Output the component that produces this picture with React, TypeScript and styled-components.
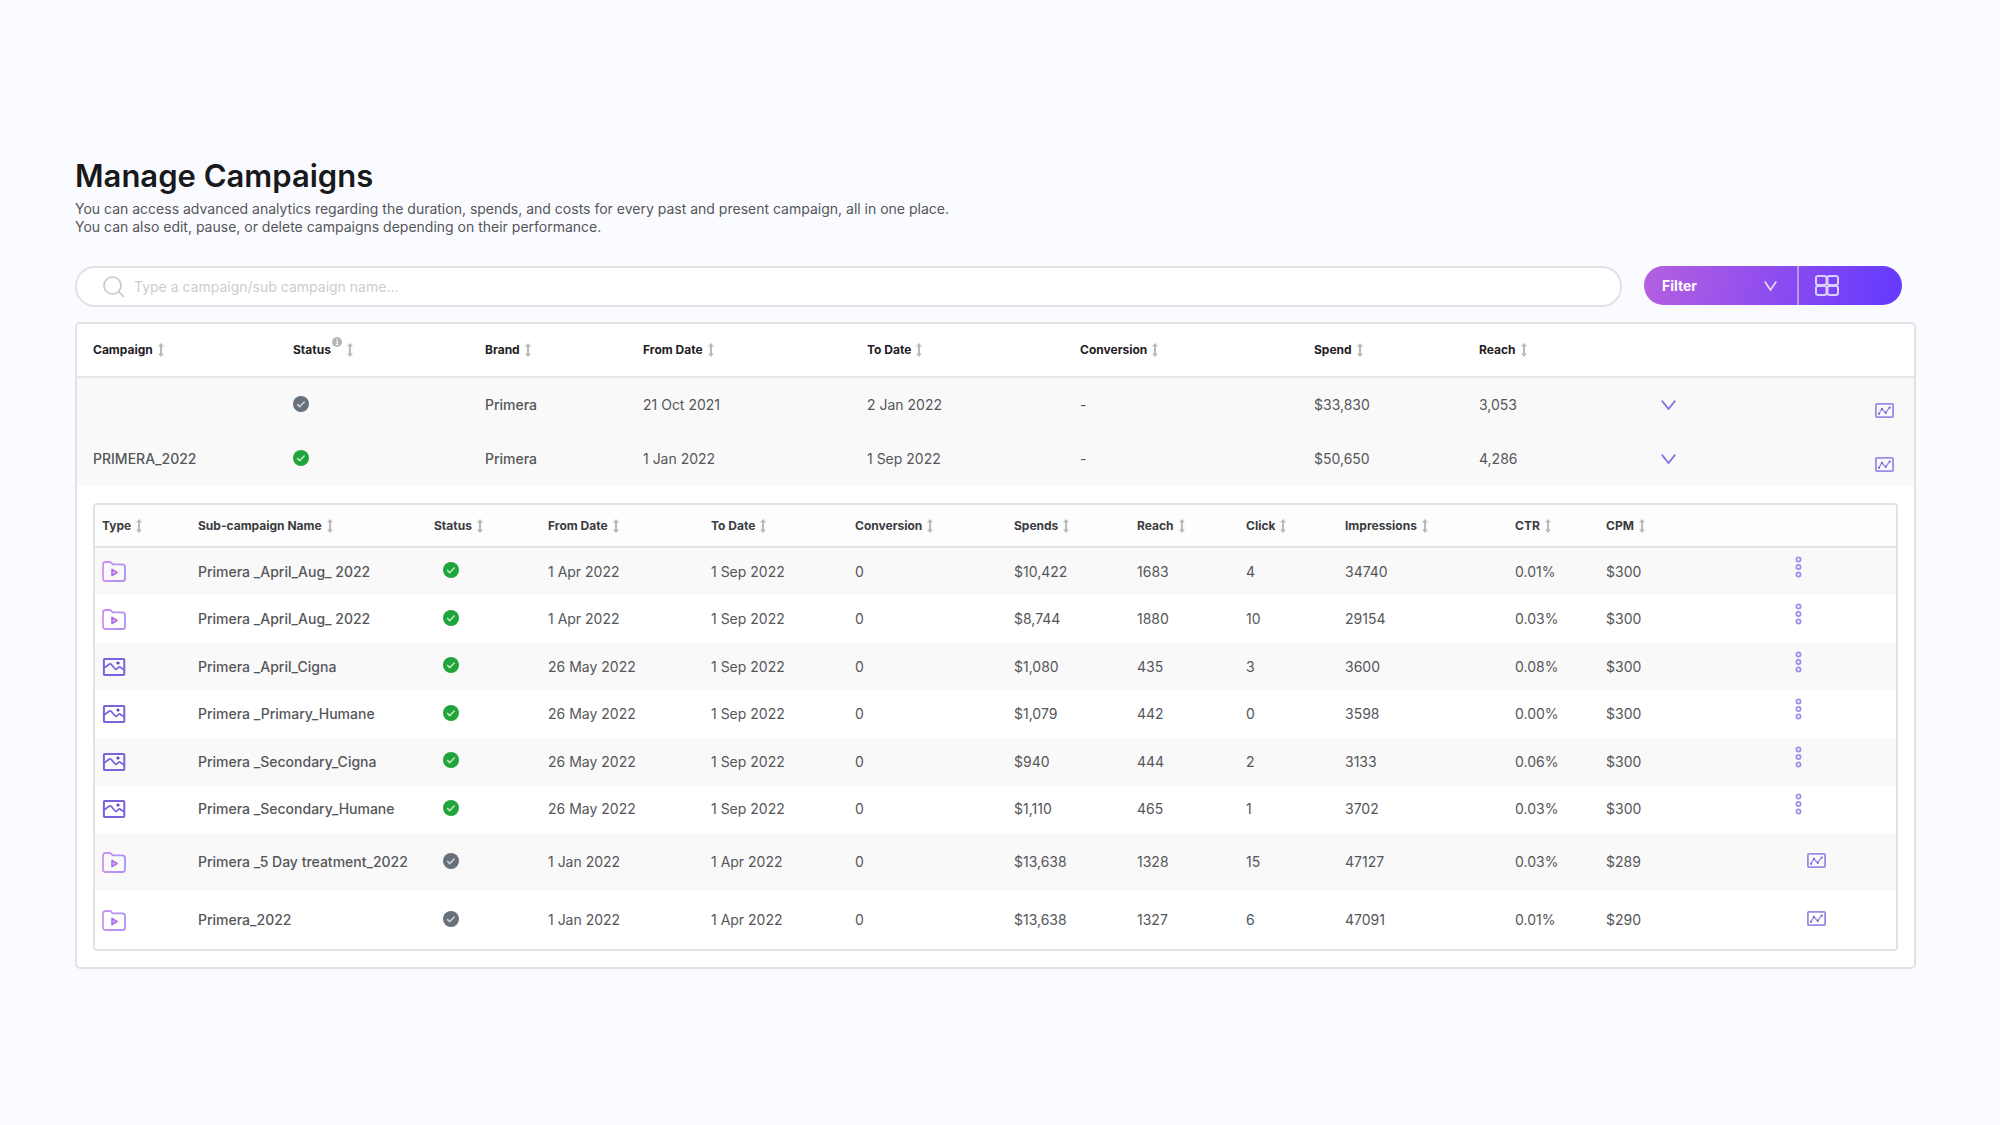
import React from "react";
import styled, { createGlobalStyle, css } from "styled-components";

const GlobalStyle = createGlobalStyle`
  *, *::before, *::after { box-sizing: border-box; }
  body {
    margin: 0;
    background: #fafbfe;
    color: #55565a;
    font-family: Inter, "Noto Sans", sans-serif;
    font-size: 14px;
    line-height: 18px;
  }
  button, input { font: inherit; color: inherit; }
  svg { display: block; }
`;

const Page = styled.main`
  padding: 156px 84px 156px 75px;
`;

const Title = styled.h1`
  margin: 0 0 4px;
  color: #17191c;
  font-size: 31px;
  font-weight: 600;
  line-height: 40px;
`;

const Intro = styled.p`
  margin: 0;
`;

const Toolbar = styled.div`
  display: flex;
  align-items: flex-start;
  gap: 22px;
  margin: 30px 0 15px;
  padding-right: 14px;
`;

const SearchBox = styled.label`
  display: flex;
  flex: 1;
  align-items: center;
  gap: 9px;
  height: 41px;
  padding: 0 26px;
  border: 2px solid #e1e2e4;
  border-radius: 20px;
  background: #fff;
`;

const SearchInput = styled.input`
  flex: 1;
  min-width: 0;
  padding: 0;
  border: 0;
  outline: 0;
  background: none;
  &::placeholder { color: #cdcdcd; opacity: 1; }
`;

const ActionGroup = styled.div`
  display: flex;
  height: 39px;
  border-radius: 20px;
  overflow: hidden;
  background: linear-gradient(100deg, #b35fe0 2%, #8a4bf0 55%, #693cfd 92%);
`;

const ActionButton = styled.button<{ $width: number }>`
  display: flex;
  align-items: center;
  justify-content: space-between;
  width: ${(p) => p.$width}px;
  padding: 0 20px 0 18px;
  border: 0;
  background: none;
  color: #fff;
  font-weight: 700;
  cursor: pointer;
  & + & { border-left: 2px solid #b19be6; padding-left: 16px; }
`;

const Panel = styled.section`
  overflow-x: auto;
  border: 2px solid #e1e2e4;
  border-radius: 5px;
  background: #fff;
`;

const Table = styled.table`
  width: 100%;
  table-layout: fixed;
  border-collapse: separate;
  border-spacing: 0;
`;

const Col = styled.col<{ $width: number }>`
  width: ${(p) => p.$width}px;
`;

type Level = "campaign" | "sub";

const HeadCell = styled.th<{ $level: Level }>`
  padding: 0 0 0 16px;
  height: 54px;
  border-bottom: 2px solid #e6e6e7;
  text-align: left;
  white-space: nowrap;
  ${(p) =>
    p.$level === "sub" &&
    css`
      height: 43px;
      padding-left: 7px;
      border-color: #e1e2e4;
      background: #fdfdfe;
    `}
`;

const SortButton = styled.button<{ $level: Level }>`
  display: flex;
  align-items: center;
  gap: 5px;
  padding: 0;
  border: 0;
  background: none;
  color: ${(p) => (p.$level === "sub" ? "#3a3c40" : "#1f2124")};
  font-size: 12px;
  font-weight: 700;
  cursor: pointer;
`;

const InfoMark = styled.span`
  height: 18px;
  margin: -8px 0 0 -4px;
`;

const Cell = styled.td<{ $level: Level; $shade?: boolean; $tall?: boolean }>`
  height: ${(p) => (p.$level === "campaign" ? 54 : p.$tall ? 58 : p.$shade ? 47 : 48)}px;
  padding: 0 0 0 ${(p) => (p.$level === "campaign" ? 16 : 7)}px;
  background: ${(p) => (p.$shade ? "#f9f9f9" : "#fff")};
  white-space: nowrap;
`;

const Name = styled.span`
  font-weight: 500;
`;

const StatusMark = styled.span<{ $level: Level }>`
  display: flex;
  padding: ${(p) => (p.$level === "sub" ? "0 0 3px 9px" : "0 0 2px")};
`;

const IconButton = styled.button<{ $kind: "expand" | "report" | "menu" | "subReport" }>`
  display: flex;
  border: 0;
  background: none;
  cursor: pointer;
  padding: ${(p) =>
    ({ expand: "0", report: "10px 0 0", menu: "0 0 10px", subReport: "0 0 4px 12px" })[p.$kind]};
`;

const SubCell = styled.td`
  padding: 17px 16px 16px;
`;

const SubPanel = styled.div`
  overflow: hidden;
  border: 2px solid #e1e2e4;
  border-radius: 4px;
`;

const SortIcon = () => (
  <svg width="6" height="14" viewBox="0 0 6 14" aria-hidden="true">
    <path d="M3 2v10" stroke="#b9b9b9" strokeWidth="2" />
    <path d="M0 3.5 3 0l3 3.5zM0 10.5 3 14l3-3.5z" fill="#b9b9b9" />
  </svg>
);

const InfoIcon = () => (
  <svg width="10" height="10" viewBox="0 0 10 10" aria-hidden="true">
    <circle cx="5" cy="5" r="5" fill="#b4b4b4" />
    <path d="M4 4.4h1.3v3M3.8 7.4h2.6" stroke="#fff" fill="none" />
    <circle cx="5" cy="2.6" r=".8" fill="#fff" />
  </svg>
);

const SearchIcon = () => (
  <svg width="22" height="22" viewBox="0 0 22 22" fill="none" stroke="#c9c9c9" strokeWidth="1.7" aria-hidden="true">
    <circle cx="9.5" cy="9.5" r="8.5" />
    <path d="m15.6 15.6 5.4 5.4" />
  </svg>
);

const Chevron = ({ color, width }: { color: string; width: number }) => (
  <svg width={width} height="10" viewBox={`0 0 ${width} 10`} fill="none" stroke={color} strokeWidth="1.8" aria-hidden="true">
    <path d={`M.8 .6 ${width / 2} 9 ${width - 0.8} .6`} />
  </svg>
);

const GridIcon = () => (
  <svg width="24" height="21" viewBox="0 0 24 21" fill="none" stroke="#dccffc" strokeWidth="2" aria-hidden="true">
    <rect x="1" y="1" width="10.500" height="9" rx="2.200" />
    <rect x="12.500" y="1" width="10.500" height="9" rx="2.200" />
    <rect x="1" y="11" width="10.500" height="9" rx="2.200" />
    <rect x="12.500" y="11" width="10.500" height="9" rx="2.200" />
  </svg>
);

const CheckIcon = ({ active }: { active: boolean }) => (
  <svg width="16" height="16" viewBox="0 0 16 16" role="img" aria-label={active ? "Active" : "Finished"}>
    <circle cx="8" cy="8" r="8" fill={active ? "#1fa53c" : "#68707a"} />
    <path d="m4.2 8.1 2.5 2.5 5-5.2" fill="none" stroke={active ? "#c0e8b8" : "#d0d3d6"} strokeWidth="1.5" />
  </svg>
);

const ReportIcon = () => (
  <svg width="19" height="15" viewBox="0 0 19 15" fill="none" stroke="#968de4" aria-hidden="true">
    <rect x=".9" y=".9" width="17.2" height="13.2" rx="1" strokeWidth="1.8" />
    <path d="m3.8 11 3-5.2 3.8 4 4-5.4" strokeWidth="1.4" />
    <g fill="#6f62d8" stroke="none">
      <circle cx="4" cy="10.8" r="1.1" />
      <circle cx="7" cy="5.8" r="1.1" />
      <circle cx="10.8" cy="9.8" r="1.1" />
      <circle cx="14.8" cy="4.6" r="1.1" />
    </g>
  </svg>
);

const MenuIcon = () => (
  <svg width="7" height="22" viewBox="0 0 7 22" fill="none" stroke="#9a91e8" strokeWidth="1.8" aria-hidden="true">
    <circle cx="3.5" cy="3.5" r="2.1" />
    <circle cx="3.5" cy="11" r="2.1" />
    <circle cx="3.5" cy="18.5" r="2.1" />
  </svg>
);

const FolderIcon = () => (
  <svg width="24" height="21" viewBox="0 0 24 21" fill="none" role="img" aria-label="Video">
    <defs>
      <linearGradient id="folder" x1="0" y1="0" x2="24" y2="0" gradientUnits="userSpaceOnUse">
        <stop stopColor="#d193ec" />
        <stop offset="1" stopColor="#a792fa" />
      </linearGradient>
    </defs>
    <path
      d="M1 3.4Q1 1 3.4 1h4.200q1 0 1.700.800l1.400 1.600h9.600q2.700 0 2.700 2.600v11.400q0 2.600-2.600 2.600H3.600Q1 20 1 17.400z"
      stroke="url(#folder)"
      strokeWidth="1.8"
    />
    <path d="M10 8.400v6.200l5-3.100z" fill="#d9b8f8" stroke="#ab6bea" strokeWidth="1.6" strokeLinejoin="round" />
  </svg>
);

const ImageIcon = () => (
  <svg width="24" height="18" viewBox="0 0 24 18" fill="none" stroke="#7c62dc" role="img" aria-label="Image">
    <rect x="1.9" y="1" width="20.4" height="16" rx=".8" strokeWidth="2" />
    <path d="m2 10 5.500-4q.8-.5 1.500.2l4.200 4.800q.7.700 1.400.1l2.200-1.900q.7-.5 1.400 0l3.800 2.600" strokeWidth="1.7" />
    <circle cx="16" cy="5" r="1.6" fill="#5a3fd0" stroke="none" />
  </svg>
);

type Heading = { label: string; width: number; info?: boolean };

const campaignColumns: Heading[] = [
  { label: "Campaign", width: 200 },
  { label: "Status", width: 192, info: true },
  { label: "Brand", width: 158 },
  { label: "From Date", width: 224 },
  { label: "To Date", width: 213 },
  { label: "Conversion", width: 234 },
  { label: "Spend", width: 165 },
  { label: "Reach", width: 182 },
  { label: "", width: 214 },
  { label: "", width: 55 },
];

const subColumns: Heading[] = [
  { label: "Type", width: 96 },
  { label: "Sub-campaign Name", width: 236 },
  { label: "Status", width: 114 },
  { label: "From Date", width: 163 },
  { label: "To Date", width: 144 },
  { label: "Conversion", width: 159 },
  { label: "Spends", width: 123 },
  { label: "Reach", width: 109 },
  { label: "Click", width: 99 },
  { label: "Impressions", width: 170 },
  { label: "CTR", width: 91 },
  { label: "CPM", width: 189 },
  { label: "", width: 108 },
];

const campaigns = [
  { name: "", active: false, values: ["21 Oct 2021", "2 Jan 2022", "-", "$33,830", "3,053"] },
  { name: "PRIMERA_2022", active: true, values: ["1 Jan 2022", "1 Sep 2022", "-", "$50,650", "4,286"] },
];

const subCampaigns = [
  { video: true, name: "Primera _April_Aug_ 2022", active: true, values: ["1 Apr 2022", "1 Sep 2022", "0", "$10,422", "1683", "4", "34740", "0.01%", "$300"] },
  { video: true, name: "Primera _April_Aug_ 2022", active: true, values: ["1 Apr 2022", "1 Sep 2022", "0", "$8,744", "1880", "10", "29154", "0.03%", "$300"] },
  { video: false, name: "Primera _April_Cigna", active: true, values: ["26 May 2022", "1 Sep 2022", "0", "$1,080", "435", "3", "3600", "0.08%", "$300"] },
  { video: false, name: "Primera _Primary_Humane", active: true, values: ["26 May 2022", "1 Sep 2022", "0", "$1,079", "442", "0", "3598", "0.00%", "$300"] },
  { video: false, name: "Primera _Secondary_Cigna", active: true, values: ["26 May 2022", "1 Sep 2022", "0", "$940", "444", "2", "3133", "0.06%", "$300"] },
  { video: false, name: "Primera _Secondary_Humane", active: true, values: ["26 May 2022", "1 Sep 2022", "0", "$1,110", "465", "1", "3702", "0.03%", "$300"] },
  { video: true, name: "Primera _5 Day treatment_2022", active: false, values: ["1 Jan 2022", "1 Apr 2022", "0", "$13,638", "1328", "15", "47127", "0.03%", "$289"] },
  { video: true, name: "Primera_2022", active: false, values: ["1 Jan 2022", "1 Apr 2022", "0", "$13,638", "1327", "6", "47091", "0.01%", "$290"] },
];

const TableHead = ({ columns, level }: { columns: Heading[]; level: Level }) => (
  <>
    <colgroup>
      {columns.map((c, i) => (
        <Col key={i} $width={c.width} />
      ))}
    </colgroup>
    <thead>
      <tr>
        {columns.map((c, i) => (
          <HeadCell key={i} $level={level} scope="col">
            {c.label && (
              <SortButton type="button" $level={level}>
                {c.label}
                {c.info && (
                  <InfoMark>
                    <InfoIcon />
                  </InfoMark>
                )}
                <SortIcon />
              </SortButton>
            )}
          </HeadCell>
        ))}
      </tr>
    </thead>
  </>
);

const SubCampaignTable = () => (
  <SubPanel>
    <Table>
      <TableHead columns={subColumns} level="sub" />
      <tbody>
        {subCampaigns.map((s, i) => {
          const cell = { $level: "sub" as Level, $shade: i % 2 === 0, $tall: !s.active };
          return (
            <tr key={i}>
              <Cell {...cell}>{s.video ? <FolderIcon /> : <ImageIcon />}</Cell>
              <Cell {...cell}>
                <Name>{s.name}</Name>
              </Cell>
              <Cell {...cell}>
                <StatusMark $level="sub">
                  <CheckIcon active={s.active} />
                </StatusMark>
              </Cell>
              {s.values.map((v, j) => (
                <Cell key={j} {...cell}>
                  {v}
                </Cell>
              ))}
              <Cell {...cell}>
                {s.active ? (
                  <IconButton type="button" $kind="menu" aria-label="More actions">
                    <MenuIcon />
                  </IconButton>
                ) : (
                  <IconButton type="button" $kind="subReport" aria-label="Report">
                    <ReportIcon />
                  </IconButton>
                )}
              </Cell>
            </tr>
          );
        })}
      </tbody>
    </Table>
  </SubPanel>
);

export default function App() {
  return (
    <>
      <GlobalStyle />
      <Page>
        <Title>Manage Campaigns</Title>
        <Intro>
          You can access advanced analytics regarding the duration, spends, and costs for every past and present
          campaign, all in one place.
          <br />
          You can also edit, pause, or delete campaigns depending on their performance.
        </Intro>
        <Toolbar>
          <SearchBox>
            <SearchIcon />
            <SearchInput
              type="text"
              aria-label="Search campaigns"
              placeholder="Type a campaign/sub campaign name..."
            />
          </SearchBox>
          <ActionGroup>
            <ActionButton type="button" $width={153}>
              Filter
              <Chevron color="#e4d6fb" width={13} />
            </ActionButton>
            <ActionButton type="button" $width={105} aria-label="Grid view">
              <GridIcon />
            </ActionButton>
          </ActionGroup>
        </Toolbar>
        <Panel>
          <Table>
            <TableHead columns={campaignColumns} level="campaign" />
            <tbody>
              {campaigns.map((c, i) => (
                <tr key={i}>
                  <Cell $level="campaign" $shade>
                    <Name>{c.name}</Name>
                  </Cell>
                  <Cell $level="campaign" $shade>
                    <StatusMark $level="campaign">
                      <CheckIcon active={c.active} />
                    </StatusMark>
                  </Cell>
                  <Cell $level="campaign" $shade>
                    <Name>Primera</Name>
                  </Cell>
                  {c.values.map((v, j) => (
                    <Cell key={j} $level="campaign" $shade>
                      {v}
                    </Cell>
                  ))}
                  <Cell $level="campaign" $shade>
                    <IconButton type="button" $kind="expand" aria-label="Show sub-campaigns">
                      <Chevron color="#8277de" width={15} />
                    </IconButton>
                  </Cell>
                  <Cell $level="campaign" $shade>
                    <IconButton type="button" $kind="report" aria-label="Report">
                      <ReportIcon />
                    </IconButton>
                  </Cell>
                </tr>
              ))}
              <tr>
                <SubCell colSpan={campaignColumns.length}>
                  <SubCampaignTable />
                </SubCell>
              </tr>
            </tbody>
          </Table>
        </Panel>
      </Page>
    </>
  );
}
